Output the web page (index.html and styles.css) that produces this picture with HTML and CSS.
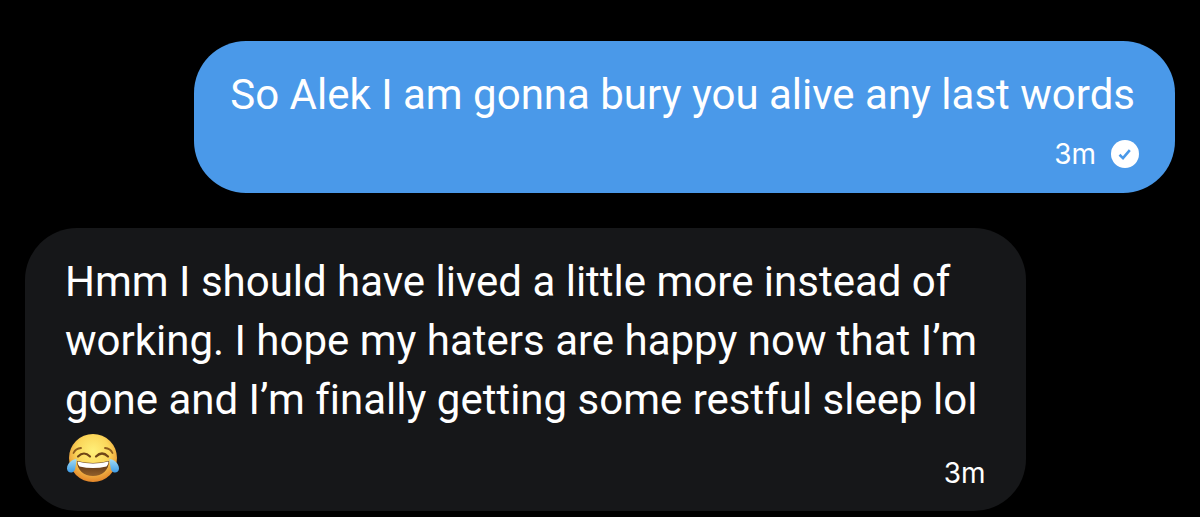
FILE: index.html
```html
<!DOCTYPE html>
<html lang="en">
<head>
<meta charset="utf-8">
<title>Messages</title>
<link rel="stylesheet" href="styles.css">
</head>

<body>
<main class="chat">
	<div class="msg sent">
		<p class="text">So Alek I am gonna bury you alive any last words</p>
		<div class="meta">
			<time>3m</time>
			<svg class="check" viewBox="0 0 28 28" role="img" aria-label="Sent">
				<circle cx="14" cy="14" r="14" fill="#fff"/>
				<path d="M8.500 14.800l3.500 3.400 6.800-8" fill="none" stroke="#4a99e9" stroke-width="2.600"/>
			</svg>
		</div>
	</div>
	<div class="msg received">
		<p class="text">Hmm I should have lived a little more instead of<br>working. I hope my haters are happy now that I’m<br>gone and I’m finally getting some restful sleep lol</p>
		<div class="last">
			<svg class="joy" viewBox="0 0 54 50" role="img" aria-label="Face with tears of joy">
				<defs>
					<radialGradient id="face" cx="50%" cy="36%" r="62%">
						<stop offset="0" stop-color="#fff07a"/>
						<stop offset="0.55" stop-color="#fbd65a"/>
						<stop offset="1" stop-color="#e58a2c"/>
					</radialGradient>
					<linearGradient id="mouth" x1="0" y1="0" x2="0" y2="1">
						<stop offset="0" stop-color="#4f2a10"/>
						<stop offset="1" stop-color="#93602a"/>
					</linearGradient>
					<linearGradient id="tear" x1="0" y1="0" x2="0" y2="1">
						<stop offset="0" stop-color="#a5dcf4"/>
						<stop offset="1" stop-color="#3c9ce8"/>
					</linearGradient>
				</defs>
				<circle cx="28" cy="25" r="24" fill="url(#face)"/>
				<path d="M12 28q16 4 32 0c0 9-7 15-16 15s-16-6-16-15z" fill="url(#mouth)"/>
				<path d="M12.500 28.500q15.500 4 31 0c0 2-1 4-2 5q-13.500 3-27 0c-1-1-2-3-2-5z" fill="#fff"/>
				<path d="M13 23.500q6-6 12 0M31 23.500q6-6 12 0" fill="none" stroke="#6f4516" stroke-width="2.200" stroke-linecap="round"/>
				<path d="M8.500 20q2-4.500 7.500-5M40 15q5.500.5 7.500 5" fill="none" stroke="#8f5c1d" stroke-width="1.800" stroke-linecap="round"/>
				<path d="M11.500 26C8 26 2 30 2 35.500c0 5 6.500 5.500 8 1 .8-3 1.200-7 1.500-10.500zM44.500 26C48 26 54 30 54 35.500c0 5-6.500 5.500-8 1-.8-3-1.200-7-1.500-10.500z" fill="url(#tear)"/>
			</svg>
			<time>3m</time>
		</div>
	</div>
</main>
</body>
</html>
```
FILE: styles.css
```css
* {margin:0; padding:0; box-sizing:border-box;}
body{
	background: #000;
	color: #fff;
	font-family: "Inter", "Liberation Sans", sans-serif;
}
.chat{
	display: flex;
	flex-direction: column;
	gap: 35px;
	padding: 41px 25px 6px;
}
.msg{border-radius: 52px; padding: 24px 40px;}
.sent{align-self: flex-end; background: #4a99e9; padding: 24px 36px 25px;}
.received{align-self: flex-start; width: 87%; background: #161719;}
.text{
	font-family: "Roboto", "Liberation Sans", sans-serif;
	font-size: 42px;
	line-height: 59px;
	font-variant-ligatures: none;
}
.sent .text{padding-right: 4px;}
.meta{
	display: flex;
	justify-content: flex-end;
	align-items: center;
	gap: 15px;
	padding-top: 16px;
}
time{font-size: 28px; line-height: 28px;}
.check{width: 28px; height: 28px;}
.last{
	display: flex;
	justify-content: space-between;
	align-items: flex-end;
	padding-top: 4px;
}
.joy{width: 54px; height: 50px; margin-bottom: 4px;}
```
